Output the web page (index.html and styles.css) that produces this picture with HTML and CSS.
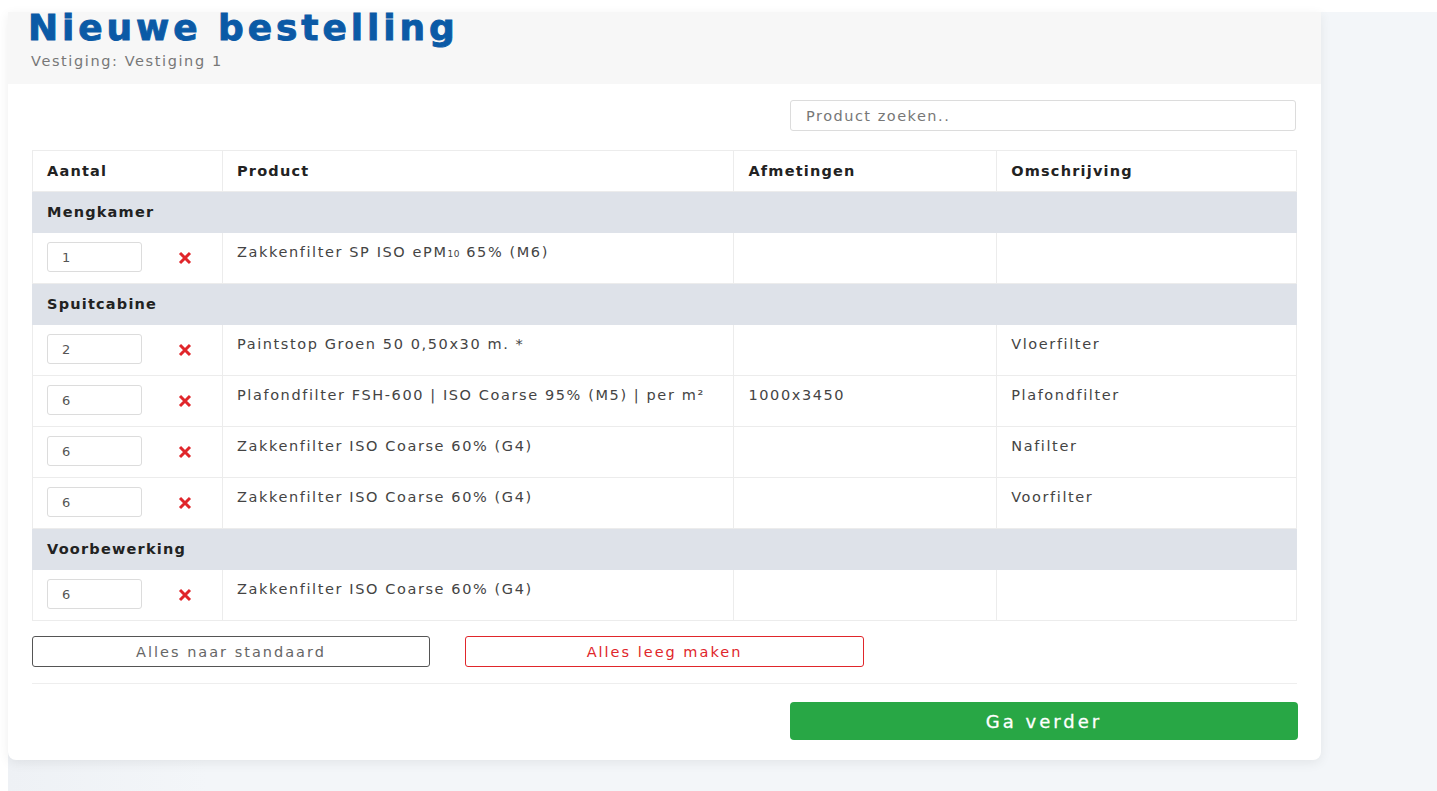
FILE: index.html
```html
<!DOCTYPE html>
<html lang="nl">
<head>
<meta charset="utf-8">
<title>Nieuwe bestelling</title>
<link rel="stylesheet" href="styles.css">
</head>
<body>
<div class="page">
  <div class="card">
    <div class="card-header">
      <h1 class="title">Nieuwe bestelling</h1>
      <div class="subtitle">Vestiging: Vestiging 1</div>
    </div>
    <div class="card-body">
      <div class="search-row">
        <input class="search" type="text" placeholder="Product zoeken..">
      </div>
      <table class="order-table">
        <colgroup>
          <col class="c-qty"><col class="c-prod"><col class="c-dim"><col class="c-desc">
        </colgroup>
        <thead>
          <tr><th>Aantal</th><th>Product</th><th>Afmetingen</th><th>Omschrijving</th></tr>
        </thead>
        <tbody>
          <tr class="group"><td colspan="4">Mengkamer</td></tr>
          <tr class="item">
            <td><div class="qty-cell"><input class="qty" value="1"><svg class="remove" viewBox="0 0 14 14"><path d="M2 2L12 12M12 2L2 12"/></svg></div></td>
            <td>Zakkenfilter SP ISO ePM<sub>10</sub> 65% (M6)</td><td></td><td></td>
          </tr>
          <tr class="group"><td colspan="4">Spuitcabine</td></tr>
          <tr class="item">
            <td><div class="qty-cell"><input class="qty" value="2"><svg class="remove" viewBox="0 0 14 14"><path d="M2 2L12 12M12 2L2 12"/></svg></div></td>
            <td>Paintstop Groen 50 0,50x30 m. *</td><td></td><td>Vloerfilter</td>
          </tr>
          <tr class="item">
            <td><div class="qty-cell"><input class="qty" value="6"><svg class="remove" viewBox="0 0 14 14"><path d="M2 2L12 12M12 2L2 12"/></svg></div></td>
            <td>Plafondfilter FSH-600 | ISO Coarse 95% (M5) | per m²</td><td>1000x3450</td><td>Plafondfilter</td>
          </tr>
          <tr class="item">
            <td><div class="qty-cell"><input class="qty" value="6"><svg class="remove" viewBox="0 0 14 14"><path d="M2 2L12 12M12 2L2 12"/></svg></div></td>
            <td>Zakkenfilter ISO Coarse 60% (G4)</td><td></td><td>Nafilter</td>
          </tr>
          <tr class="item">
            <td><div class="qty-cell"><input class="qty" value="6"><svg class="remove" viewBox="0 0 14 14"><path d="M2 2L12 12M12 2L2 12"/></svg></div></td>
            <td>Zakkenfilter ISO Coarse 60% (G4)</td><td></td><td>Voorfilter</td>
          </tr>
          <tr class="group"><td colspan="4">Voorbewerking</td></tr>
          <tr class="item">
            <td><div class="qty-cell"><input class="qty" value="6"><svg class="remove" viewBox="0 0 14 14"><path d="M2 2L12 12M12 2L2 12"/></svg></div></td>
            <td>Zakkenfilter ISO Coarse 60% (G4)</td><td></td><td></td>
          </tr>
        </tbody>
      </table>
      <div class="actions">
        <button class="btn btn-outline">Alles naar standaard</button>
        <button class="btn btn-danger">Alles leeg maken</button>
      </div>
      <hr class="divider">
      <div class="submit-row">
        <button class="btn-submit">Ga verder</button>
      </div>
    </div>
  </div>
</div>
</body>
</html>
```

FILE: styles.css
```css
html, body {
  margin: 0;
  padding: 0;
  background: #ffffff;
}

body {
  font-family: "DejaVu Sans", sans-serif;
  color: #333;
}

.page {
  margin: 12px 0 0 8px;
  min-height: 779px;
  background: linear-gradient(90deg, #eef1f5 0, #f3f6f9 200px);
  padding-right: 116px;
}

.card {
  background: #fff;
  border-radius: 0 0 8px 8px;
  box-shadow: 0 3px 12px rgba(0, 0, 0, 0.07);
  width: 1313px;
  padding-bottom: 20px;
}

.card-header {
  background: #f7f7f7;
  height: 72px;
  padding-left: 20px;
}

.title {
  margin: 0;
  font-size: 36px;
  font-weight: 700;
  color: #0b5aa6;
  line-height: 32px;
  letter-spacing: 3.9px;
  -webkit-text-stroke: 0.9px #0b5aa6;
}

.subtitle {
  margin-top: 9px;
  padding-left: 3px;
  font-size: 14.5px;
  letter-spacing: 1.6px;
  color: #777;
}

.card-body {
  padding: 16px 24px 0 24px;
}

.search-row {
  display: flex;
  justify-content: flex-end;
  margin-right: 1px;
}

.search {
  width: 506px;
  height: 31px;
  box-sizing: border-box;
  border: 1px solid #dcdcdc;
  border-radius: 3px;
  padding: 0 15px;
  font-family: inherit;
  font-size: 14.5px;
  letter-spacing: 1.5px;
  color: #555;
}

.search::placeholder {
  color: #777;
}

.order-table {
  margin-top: 19px;
  width: 1265px;
  border-collapse: collapse;
  font-size: 14.5px;
  letter-spacing: 1.6px;
  color: #444;
}

.c-qty { width: 190px; }
.c-prod { width: 512px; }
.c-dim { width: 263px; }
.c-desc { width: 300px; }

.order-table th,
.order-table td {
  border: 1px solid #ececec;
  text-align: left;
  vertical-align: top;
  padding: 0 14px;
}

.order-table th {
  height: 40px;
  vertical-align: middle;
  font-weight: 700;
  letter-spacing: 1.2px;
  color: #222;
}

.order-table tr.group td {
  background: #dee2e9;
  height: 40px;
  vertical-align: middle;
  font-weight: 700;
  letter-spacing: 1.2px;
  color: #222;
  border-color: #dee2e9;
}

.order-table tr.item td {
  height: 51px;
  padding-top: 10px;
  box-sizing: border-box;
  line-height: 18px;
}

.order-table sub {
  font-size: 9px;
  vertical-align: baseline;
  letter-spacing: 0.5px;
}

.qty-cell {
  display: flex;
  align-items: center;
  margin-top: -1px;
}

.qty {
  width: 95px;
  height: 30px;
  box-sizing: border-box;
  border: 1px solid #dcdcdc;
  border-radius: 3px;
  padding: 0 14px;
  font-family: inherit;
  font-size: 13px;
  color: #555;
}

.remove {
  width: 14px;
  height: 14px;
  margin-left: 36px;
  margin-top: 1px;
  stroke: #e0262b;
  stroke-width: 3;
  fill: none;
}

.actions {
  display: flex;
  gap: 35px;
  margin-top: 15px;
}

.btn {
  width: 398px;
  height: 31px;
  background: #fff;
  border-radius: 3px;
  font-family: inherit;
  font-size: 14.5px;
  letter-spacing: 2px;
  cursor: pointer;
}

.btn-outline {
  border: 1px solid #555;
  color: #666;
}

.btn-danger {
  width: 399px;
  border: 1px solid #e0262b;
  color: #e0262b;
}

.divider {
  border: 0;
  border-top: 1px solid #eeeeee;
  margin: 16px 0 18px;
}

.submit-row {
  display: flex;
  justify-content: flex-end;
  margin-right: -1px;
}

.btn-submit {
  width: 508px;
  height: 38px;
  border: 0;
  border-radius: 4px;
  background: #28a745;
  color: #fff;
  font-family: inherit;
  font-size: 18px;
  letter-spacing: 3px;
  -webkit-text-stroke: 0.3px #fff;
}
```
